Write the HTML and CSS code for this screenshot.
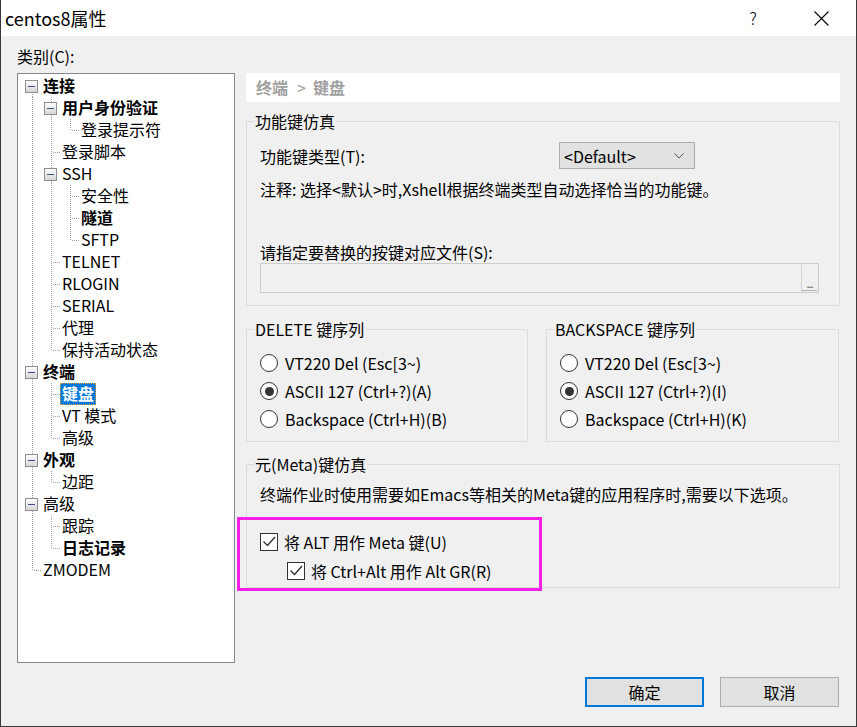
FILE: index.html
```html
<!DOCTYPE html>
<html lang="zh-CN">
<head>
<meta charset="utf-8">
<title>centos8属性</title>
<link rel="stylesheet" href="styles.css">
</head>
<body>
<div class="window">
  <div class="titlebar">
    <div class="title">centos8属性</div>
    <div class="tb-btn tb-help">?</div>
    <div class="tb-btn tb-close"><svg width="15" height="15" viewBox="0 0 15 15"><path d="M0.5 0.5L14.5 14.5M14.5 0.5L0.5 14.5" stroke="#000" stroke-width="1.1" fill="none"/></svg></div>
  </div>
  <div class="body">
    <div class="cat-label">类别(C):</div>
    <div class="main">
      <div class="tree">
        <div class="row"><span class="c bx first"><i class="box"></i></span><span class="lbl b">连接</span></div>
        <div class="row"><span class="c v"></span><span class="c bx"><i class="box"></i></span><span class="lbl b">用户身份验证</span></div>
        <div class="row"><span class="c v"></span><span class="c v"></span><span class="c l"></span><span class="lbl">登录提示符</span></div>
        <div class="row"><span class="c v"></span><span class="c t"></span><span class="lbl">登录脚本</span></div>
        <div class="row"><span class="c v"></span><span class="c bx"><i class="box"></i></span><span class="lbl">SSH</span></div>
        <div class="row"><span class="c v"></span><span class="c v"></span><span class="c t"></span><span class="lbl">安全性</span></div>
        <div class="row"><span class="c v"></span><span class="c v"></span><span class="c t"></span><span class="lbl b">隧道</span></div>
        <div class="row"><span class="c v"></span><span class="c v"></span><span class="c l"></span><span class="lbl">SFTP</span></div>
        <div class="row"><span class="c v"></span><span class="c t"></span><span class="lbl">TELNET</span></div>
        <div class="row"><span class="c v"></span><span class="c t"></span><span class="lbl">RLOGIN</span></div>
        <div class="row"><span class="c v"></span><span class="c t"></span><span class="lbl">SERIAL</span></div>
        <div class="row"><span class="c v"></span><span class="c t"></span><span class="lbl">代理</span></div>
        <div class="row"><span class="c v"></span><span class="c l"></span><span class="lbl">保持活动状态</span></div>
        <div class="row"><span class="c bx"><i class="box"></i></span><span class="lbl b">终端</span></div>
        <div class="row"><span class="c v"></span><span class="c t"></span><span class="lbl b sel">键盘</span></div>
        <div class="row"><span class="c v"></span><span class="c t"></span><span class="lbl">VT 模式</span></div>
        <div class="row"><span class="c v"></span><span class="c l"></span><span class="lbl">高级</span></div>
        <div class="row"><span class="c bx"><i class="box"></i></span><span class="lbl b">外观</span></div>
        <div class="row"><span class="c v"></span><span class="c l"></span><span class="lbl">边距</span></div>
        <div class="row"><span class="c bx"><i class="box"></i></span><span class="lbl">高级</span></div>
        <div class="row"><span class="c v"></span><span class="c t"></span><span class="lbl">跟踪</span></div>
        <div class="row"><span class="c v"></span><span class="c l"></span><span class="lbl b">日志记录</span></div>
        <div class="row"><span class="c l"></span><span class="lbl">ZMODEM</span></div>
      </div>
      <div class="panel">
        <div class="crumb">终端<span class="gt">&gt;</span>键盘</div>
        <fieldset class="group g1">
          <legend>功能键仿真</legend>
          <div class="gbody">
            <div class="frow">
              <span class="flabel">功能键类型(T):</span>
              <div class="select"><span>&lt;Default&gt;</span><svg class="chev" width="10" height="6" viewBox="0 0 10 6"><path d="M0.5 0.5L5 5L9.5 0.5" stroke="#555" stroke-width="1" fill="none"/></svg></div>
            </div>
            <div class="note">注释: 选择&lt;默认&gt;时,Xshell根据终端类型自动选择恰当的功能键。</div>
            <div class="file-label">请指定要替换的按键对应文件(S):</div>
            <div class="input"><span class="dots">...</span></div>
          </div>
        </fieldset>
        <div class="row2">
          <fieldset class="group del">
            <legend>DELETE 键序列</legend>
            <div class="opts">
              <div class="opt"><span class="radio"></span>VT220 Del (Esc[3~)</div>
              <div class="opt"><span class="radio on"></span>ASCII 127 (Ctrl+?)(A)</div>
              <div class="opt"><span class="radio"></span>Backspace (Ctrl+H)(B)</div>
            </div>
          </fieldset>
          <fieldset class="group bs">
            <legend>BACKSPACE 键序列</legend>
            <div class="opts">
              <div class="opt"><span class="radio"></span>VT220 Del (Esc[3~)</div>
              <div class="opt"><span class="radio on"></span>ASCII 127 (Ctrl+?)(I)</div>
              <div class="opt"><span class="radio"></span>Backspace (Ctrl+H)(K)</div>
            </div>
          </fieldset>
        </div>
        <fieldset class="group meta">
          <legend>元(Meta)键仿真</legend>
          <div class="gbody">
            <div class="note">终端作业时使用需要如Emacs等相关的Meta键的应用程序时,需要以下选项。</div>
            <div class="chk first"><span class="cbox"><svg width="16" height="16" viewBox="0 0 16 16"><path d="M2.5 7.5L6.5 11.5L14 3" stroke="#333" stroke-width="1.4" fill="none"/></svg></span>将 ALT 用作 Meta 键(U)</div>
            <div class="chk sub"><span class="cbox"><svg width="16" height="16" viewBox="0 0 16 16"><path d="M2.5 7.5L6.5 11.5L14 3" stroke="#333" stroke-width="1.4" fill="none"/></svg></span>将 Ctrl+Alt 用作 Alt GR(R)</div>
          </div>
        </fieldset>
      </div>
    </div>
    <div class="footer">
      <button class="btn primary">确定</button>
      <button class="btn">取消</button>
    </div>
  </div>
  <div class="highlight"></div>
</div>
</body>
</html>
```

FILE: styles.css
```css
html, body {
  margin: 0;
  padding: 0;
  background: #f0f0f0;
}

.window {
  position: relative;
  width: 857px;
  height: 727px;
  box-sizing: border-box;
  border: 1px solid #3a3a3a;
  border-top: none;
  background: #f0f0f0;
  font-family: "Noto Sans CJK SC", "Noto Sans", sans-serif;
  font-size: 16px;
  line-height: 20px;
  color: #000;
  overflow: hidden;
}

/* title bar */
.titlebar {
  height: 36px;
  background: #fff;
  display: flex;
  align-items: center;
}
.title {
  flex: 1;
  padding-left: 4px;
  font-size: 18px;
  line-height: 24px;
}
.tb-btn {
  width: 40px;
  height: 36px;
  display: flex;
  align-items: center;
  justify-content: center;
}
.tb-help {
  font-size: 17px;
  font-weight: 300;
  margin-right: 28px;
}
.tb-close {
  margin-right: 15px;
}

/* body */
.body {
  padding: 10px 16px 0;
}
.cat-label {
  height: 20px;
  margin-bottom: 7px;
}
.main {
  display: flex;
  gap: 11px;
  height: 590px;
}

/* tree */
.tree {
  width: 218px;
  height: 590px;
  box-sizing: border-box;
  border: 1px solid #828790;
  background: #fff;
  padding: 1px 0 0 5px;
}
.row {
  display: flex;
  align-items: center;
  height: 22px;
}
.c {
  position: relative;
  flex: none;
  width: 19px;
  height: 22px;
}
.c.v::before,
.c.t::before,
.c.l::before,
.c.bx::before {
  content: "";
  position: absolute;
  left: 9px;
  top: 0;
  bottom: 0;
  width: 1px;
  background: repeating-linear-gradient(to bottom, #a0a0a0 0 1px, transparent 1px 2px);
}
.c.l::before {
  bottom: 11px;
}
.c.bx.first::before {
  top: 11px;
}
.c.t::after,
.c.l::after {
  content: "";
  position: absolute;
  left: 10px;
  top: 11px;
  width: 9px;
  height: 1px;
  background: repeating-linear-gradient(to right, transparent 0 1px, #a0a0a0 1px 2px);
}
.box {
  position: absolute;
  z-index: 1;
  left: 2px;
  top: 5px;
  width: 13px;
  height: 13px;
  box-sizing: border-box;
  border: 1px solid #8f8f8f;
  background: linear-gradient(#fdfdfd, #d6d6d6);
}
.box::after {
  content: "";
  position: absolute;
  left: 2px;
  top: 5px;
  width: 7px;
  height: 1px;
  background: #3c5180;
}
.lbl {
  margin-left: -1px;
  padding: 0 2px;
  height: 22px;
  line-height: 21px;
  white-space: nowrap;
}
.lbl.b {
  font-weight: bold;
}
.lbl.sel {
  background: #0078d7;
  color: #fff;
  outline: 1px dotted #e0a040;
  outline-offset: -1px;
}

/* right panel */
.panel {
  width: 594px;
  display: flex;
  flex-direction: column;
}
.crumb {
  height: 29px;
  line-height: 29px;
  background: #fff;
  padding-left: 10px;
  font-weight: bold;
  color: #a0a0a0;
}
.crumb .gt {
  font-weight: normal;
  margin: 0 7px 0 9px;
}
.group {
  margin: 0;
  padding: 0 7px 12px;
  border: 1px solid #dcdcdc;
  min-width: 0;
  box-sizing: border-box;
}
.group legend {
  padding: 0 1px;
  line-height: 20px;
  height: 20px;
}
.g1 {
  margin-top: 9px;
  width: 594px;
}
.gbody {
  padding-left: 6px;
}
.frow {
  display: flex;
  align-items: center;
  height: 27px;
  margin-top: 11px;
}
.flabel {
  width: 299px;
}
.select {
  width: 136px;
  height: 27px;
  box-sizing: border-box;
  border: 1px solid #adadad;
  background: #e1e1e1;
  display: flex;
  align-items: center;
  justify-content: space-between;
  padding: 0 10px 0 4px;
}
.note {
  margin-top: 10px;
  white-space: nowrap;
}
.file-label {
  margin-top: 43px;
}
.input {
  margin-top: 1px;
  width: 559px;
  height: 30px;
  box-sizing: border-box;
  border: 1px solid #cccccc;
  background: #f0f0f0;
  display: flex;
  justify-content: flex-end;
  padding: 1px;
}
.dots {
  width: 16px;
  height: 26px;
  box-sizing: border-box;
  border-left: 1px solid #d4d4d4;
  border-bottom: 1px solid #b4b4b4;
  font-size: 11px;
  line-height: 12px;
  padding-top: 12px;
  color: #555;
  text-align: center;
  letter-spacing: -1px;
}

.row2 {
  display: flex;
  gap: 18px;
  margin-top: 13px;
}
.del {
  width: 282px;
  padding-bottom: 8px;
}
.bs {
  width: 293px;
  padding-bottom: 8px;
}
.opts {
  margin-top: 10px;
  padding-left: 6px;
}
.opt {
  height: 28px;
  display: flex;
  align-items: center;
  white-space: nowrap;
}
.radio {
  position: relative;
  width: 18px;
  height: 18px;
  box-sizing: border-box;
  border: 1px solid #333;
  border-radius: 50%;
  background: #fff;
  margin-right: 7px;
  flex: none;
}
.radio.on::after {
  content: "";
  position: absolute;
  left: 3.5px;
  top: 3.5px;
  width: 9px;
  height: 9px;
  border-radius: 50%;
  background: #333;
}

.meta {
  margin-top: 12px;
  width: 594px;
  padding-bottom: 2px;
}
.chk {
  display: flex;
  align-items: center;
  height: 29px;
  white-space: nowrap;
}
.chk.first {
  margin-top: 24px;
  height: 28px;
}
.chk.sub {
  padding-left: 27px;
}
.cbox {
  width: 18px;
  height: 18px;
  box-sizing: border-box;
  border: 1px solid #333;
  background: #fff;
  margin-right: 6px;
  flex: none;
  display: flex;
  align-items: center;
  justify-content: center;
}

/* footer */
.footer {
  display: flex;
  justify-content: flex-end;
  gap: 16px;
  margin-top: 14px;
  padding-right: 1px;
}
.btn {
  width: 119px;
  height: 30px;
  box-sizing: border-box;
  border: 1px solid #adadad;
  background: #e1e1e1;
  font-family: "Noto Sans CJK SC", sans-serif;
  font-size: 16px;
  color: #000;
  padding: 0;
}
.btn.primary {
  border: 2px solid #0078d7;
}

/* annotation overlay */
.highlight {
  position: absolute;
  left: 236px;
  top: 517px;
  width: 305px;
  height: 74px;
  box-sizing: border-box;
  border: 3px solid #f51fe6;
}
```
